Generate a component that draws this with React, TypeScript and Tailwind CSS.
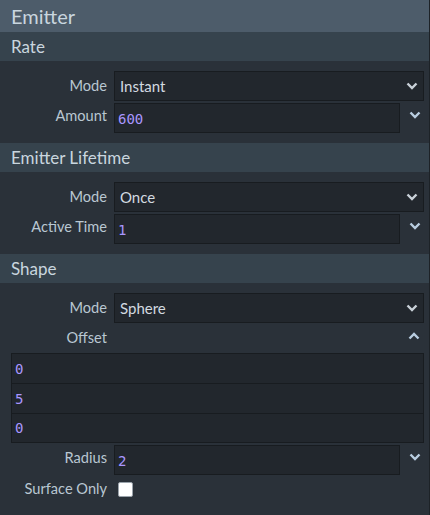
import React from "react";

const Chevron = ({ up = false, color = "#c9d1d8" }: { up?: boolean; color?: string }) => (
  <svg width="12" height="8" viewBox="0 0 12 8" className="block">
    <polyline
      points={up ? "1.5,6.5 6,2 10.5,6.5" : "1.5,1.5 6,6 10.5,1.5"}
      fill="none"
      stroke={color}
      strokeWidth="2.4"
    />
  </svg>
);

const Label = ({ children, up = false }: { children: React.ReactNode; up?: boolean }) => (
  <div
    className={`w-[107px] shrink-0 text-right text-[14.6px] text-[#b9c7d2] leading-none ${up ? "-mt-[3px]" : ""}`}
  >
    {children}
  </div>
);

const mono = { fontFamily: '"DejaVu Sans Mono", monospace' };

const SelectRow = ({ label, value }: { label: string; value: string }) => (
  <div className="flex items-center h-[30px]">
    <Label>{label}</Label>
    <div className="ml-[7px] w-[310px] h-[30px] flex items-center justify-between border border-[#181c20] bg-[#22272d] pl-[5px] pr-[5px]">
      <span className="text-[15px] text-[#d3dae0] pt-[1px]">{value}</span>
      <Chevron />
    </div>
  </div>
);

const NumRow = ({ label, value }: { label: string; value: string }) => (
  <div className="flex items-center h-[30px]">
    <Label up>{label}</Label>
    <div className="ml-[7px] w-[287px] h-[30px] flex items-center border border-[#181c20] bg-[#22272d] pl-[3px]">
      <span className="text-[14px] text-[#a996ff] pt-[2px]" style={mono}>{value}</span>
    </div>
    <div className="w-[29px] flex justify-center -mt-[6px]">
      <Chevron color="#b9cde0" />
    </div>
  </div>
);

const SectionHeader = ({ title }: { title: string }) => (
  <div className="h-[29px] bg-[#36434d] flex items-center px-[11px] text-[17px] text-[#c9d6df]">{title}</div>
);

export default function App() {
  return (
    <div
      className="w-[430px] h-[515px] bg-[#2a3139] border-r border-[#1d2227] overflow-hidden"
      style={{ fontFamily: 'Lato, "Noto Sans", sans-serif' }}
    >
      <div className="h-[32px] bg-[#4d5c6a] flex items-center px-[11px] text-[20px] text-[#c9d6df]">Emitter</div>

      <SectionHeader title="Rate" />
      <div className="py-[10px] flex flex-col gap-[2px]">
        <SelectRow label="Mode" value="Instant" />
        <NumRow label="Amount" value="600" />
      </div>

      <SectionHeader title="Emitter Lifetime" />
      <div className="py-[10px] flex flex-col gap-[2px]">
        <SelectRow label="Mode" value="Once" />
        <NumRow label="Active Time" value="1" />
      </div>

      <SectionHeader title="Shape" />
      <div className="pt-[10px] flex flex-col">
        <SelectRow label="Mode" value="Sphere" />
        <div className="flex items-center h-[30px]">
          <Label>Offset</Label>
          <div className="flex-1" />
          <div className="w-[30px] flex justify-center -mt-[4px]">
            <Chevron up color="#b9cde0" />
          </div>
        </div>
        <div className="ml-[11px] w-[413px] flex flex-col border border-[#181c20] bg-[#22272d]">
          <div className="h-[30px] flex items-center pl-[3px] border-b border-[#181c20]">
            <span className="text-[14px] text-[#a996ff] pt-[2px]" style={mono}>0</span>
          </div>
          <div className="h-[30px] flex items-center pl-[3px] border-b border-[#181c20]">
            <span className="text-[14px] text-[#a996ff] pt-[2px]" style={mono}>5</span>
          </div>
          <div className="h-[28px] flex items-center pl-[3px]">
            <span className="text-[14px] text-[#a996ff] pt-[1px]" style={mono}>0</span>
          </div>
        </div>
        <div className="mt-[2px]">
          <NumRow label="Radius" value="2" />
        </div>
        <div className="flex items-center h-[28px]">
          <Label>Surface Only</Label>
          <div className="ml-[11px] w-[15px] h-[15px] rounded-[2px] bg-white border border-[#9aa3ab]" />
        </div>
      </div>
    </div>
  );
}
